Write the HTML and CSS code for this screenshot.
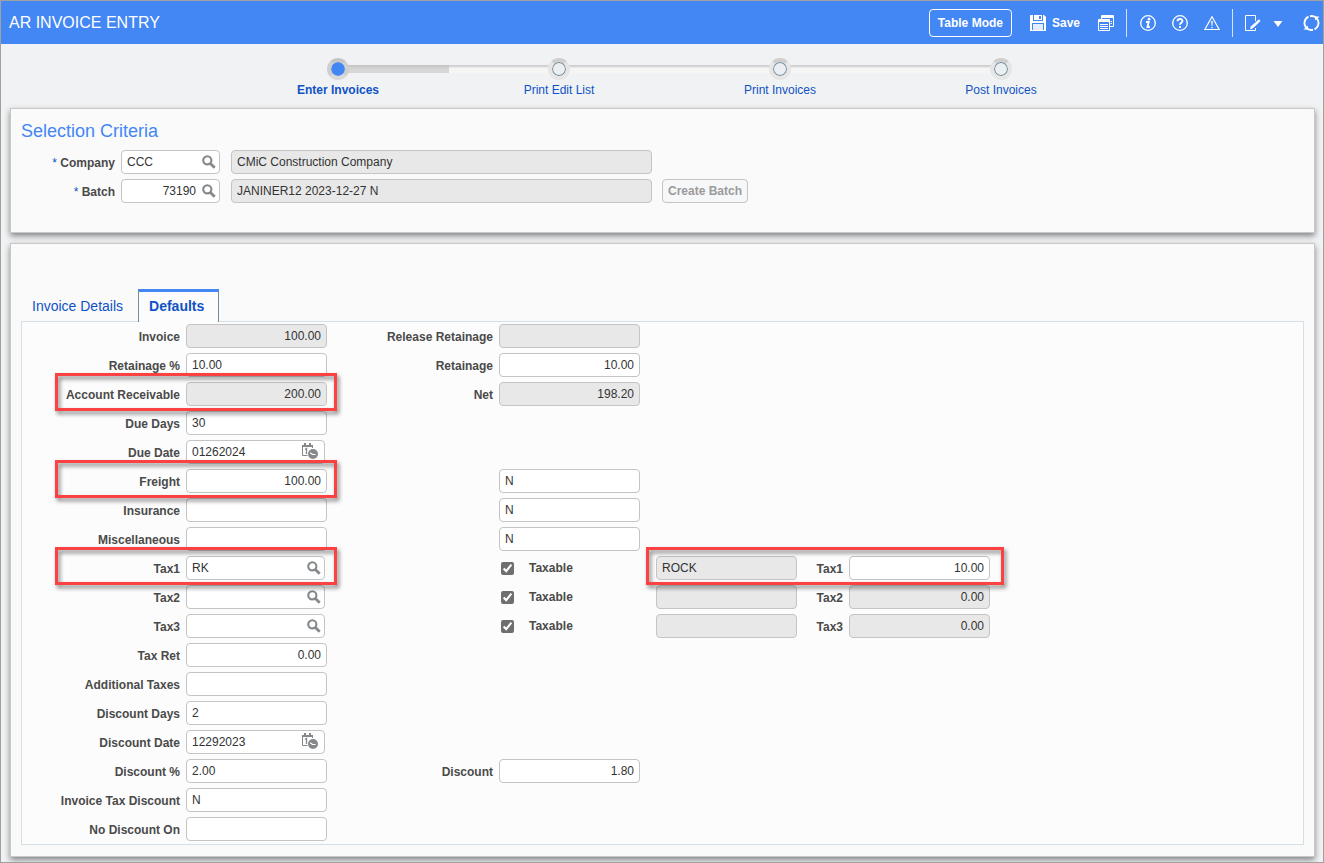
FILE: index.html
```html
<!DOCTYPE html>
<html lang="en">
<head>
<meta charset="UTF-8">
<meta name="viewport" content="width=device-width, initial-scale=1.0">
<title>AR Invoice Entry</title>
<link rel="stylesheet" href="styles.css">
</head>
<body>

<!-- shared icons -->
<svg class="sprite" aria-hidden="true">
    <symbol id="icon-search" viewBox="0 0 14 14">
        <circle cx="5.3" cy="5.3" r="4.1" fill="none" stroke="currentColor" stroke-width="2.1"/>
        <path d="M8.4 8.4L12.7 12.7" stroke="currentColor" stroke-width="2.8"/>
    </symbol>
    <symbol id="icon-date" viewBox="0 0 16 16">
        <path d="M5.5 12.5H.5V2.5H10.5V5" fill="none" stroke="currentColor"/>
        <path d="M0 2H11V4H0zM2 0H4V3H2zM7 0H9V3H7z" fill="currentColor"/>
        <path d="M3 6.5L4.5 5.5V11" fill="none" stroke="currentColor" stroke-width="1.3"/>
        <circle cx="11" cy="11" r="5" fill="currentColor"/>
        <path d="M8.2 9.7L10.5 11.5H13.5" fill="none" stroke="#fff" stroke-width="1.2"/>
    </symbol>
</svg>

<header class="topbar">
    <h1>AR INVOICE ENTRY</h1>
    <div class="actions">
        <button class="btn-mode" type="button">Table Mode</button>
        <button class="btn-save" type="button">
            <svg width="16" height="16" viewBox="0 0 16 16"><path fill="#fff" d="M0 0H14L16 2V16H0z"/><path fill="#4387f4" d="M3 0H13V6H3zM2 8H14V15H2z"/><path fill="#fff" fill-rule="evenodd" d="M4 0H12V5H4zM9 1V4H11V1z"/><path fill="#e3edfd" d="M3 9H13V15H3z"/></svg>
            Save
        </button>
        <button class="icon-btn" type="button" aria-label="Records">
            <svg width="16" height="16" viewBox="0 0 16 16" fill="none" stroke="#fff"><path d="M3.500 4V.5H15.500V11.500H12"/><path d="M3 2H16" stroke-width="2"/><path d="M.5 4.500H11.500V15.500H.5z"/><path d="M0 6H12" stroke-width="2"/><path d="M2 9.500H10M2 11.500H10M2 13.500H10M12.500 6.500H14M12.500 8.500H14"/></svg>
        </button>
    </div>
    <div class="actions divided">
        <button class="icon-btn" type="button" aria-label="Information">
            <svg width="16" height="16" viewBox="0 0 16 16"><circle cx="8" cy="8" r="7.300" fill="none" stroke="#fff" stroke-width="1.300"/><circle cx="9" cy="4.200" r="1.400" fill="#fff"/><path d="M6 7H8.700L7.500 12H9.800" fill="none" stroke="#fff" stroke-width="1.900"/></svg>
        </button>
        <button class="icon-btn" type="button" aria-label="Help">
            <svg width="16" height="16" viewBox="0 0 16 16"><circle cx="8" cy="8" r="7.300" fill="none" stroke="#fff" stroke-width="1.300"/><path d="M5.600 6.200C5.600 3.200 10.400 3.200 10.400 6C10.400 7.800 8 7.600 8 9.800" fill="none" stroke="#fff" stroke-width="2"/><path d="M7 11H9V13H7z" fill="#fff"/></svg>
        </button>
        <button class="icon-btn" type="button" aria-label="Warnings">
            <svg width="16" height="16" viewBox="0 0 16 16"><path d="M8 1.800L15.200 14.500H.8z" fill="none" stroke="#fff" stroke-width="1.200"/><path d="M7.200 6H8.800L8.400 11H7.600zM7.300 12H8.700V13.300H7.300z" fill="#fff"/></svg>
        </button>
    </div>
    <div class="actions divided edit">
        <button class="icon-btn" type="button" aria-label="Edit">
            <svg width="16" height="16" viewBox="0 0 16 16"><path d="M10.500 6V.5H.5V15.500H10.500V13" fill="none" stroke="#fff"/><path d="M5 14.500L6 11.200L14 4.300L15.500 6L8 13.200z" fill="#fff"/></svg>
        </button>
        <button class="icon-btn" type="button" aria-label="More">
            <svg width="10" height="16" viewBox="0 0 10 16"><path d="M.5 6H9.500L5 12z" fill="#fff"/></svg>
        </button>
        <button class="icon-btn refresh" type="button" aria-label="Refresh">
            <svg width="17" height="16" viewBox="0 0 17 16"><path d="M3.200 12.600A7 7 0 0 1 5.500 1.700M7 1.200A7 7 0 0 1 13 2.600M13.800 3.400A7 7 0 0 1 11.500 14.300M10 14.800A7 7 0 0 1 4 13.400" fill="none" stroke="#fff" stroke-width="1.900"/><path d="M.5 14.500H5V10.500zM16.500 1.500H12V5.500z" fill="#fff"/></svg>
        </button>
    </div>
</header>

<nav>
    <ol class="train">
        <li class="current"><a href="#">Enter Invoices</a></li>
        <li><a href="#">Print Edit List</a></li>
        <li><a href="#">Print Invoices</a></li>
        <li><a href="#">Post Invoices</a></li>
    </ol>
</nav>

<main>
    <section class="panel criteria">
        <h2>Selection Criteria</h2>
        <div class="criteria-row">
            <label for="company"><span class="req">*</span> Company</label>
            <div class="lookup"><input type="text" id="company" value="CCC"><svg><use href="#icon-search"/></svg></div>
            <input type="text" class="desc" value="CMiC Construction Company" aria-labelledby="company" readonly>
        </div>
        <div class="criteria-row">
            <label for="batch"><span class="req">*</span> Batch</label>
            <div class="lookup"><input type="text" class="num" id="batch" value="73190"><svg><use href="#icon-search"/></svg></div>
            <input type="text" class="desc" value="JANINER12 2023-12-27 N" aria-labelledby="batch" readonly>
            <button class="btn-batch" type="button" disabled>Create Batch</button>
        </div>
    </section>

    <section class="panel details">
        <div class="tabs">
            <a href="#">Invoice Details</a>
            <a href="#" class="active">Defaults</a>
        </div>
        <form class="defaults">
            <div class="row">
                <label for="invoice">Invoice</label>
                <input type="text" class="num" id="invoice" value="100.00" readonly>
                <label for="release">Release Retainage</label>
                <input type="text" class="num" id="release" readonly>
            </div>
            <div class="row">
                <label for="retainage-pct">Retainage %</label>
                <input type="text" id="retainage-pct" value="10.00">
                <label for="retainage">Retainage</label>
                <input type="text" class="num" id="retainage" value="10.00">
            </div>
            <div class="row">
                <label for="receivable">Account Receivable</label>
                <input type="text" class="num" id="receivable" value="200.00" readonly>
                <label for="net">Net</label>
                <input type="text" class="num" id="net" value="198.20" readonly>
                <span class="callout"></span>
            </div>
            <div class="row">
                <label for="due-days">Due Days</label>
                <input type="text" id="due-days" value="30">
            </div>
            <div class="row">
                <label for="due-date">Due Date</label>
                <div class="lookup date"><input type="text" id="due-date" value="01262024"><svg><use href="#icon-date"/></svg></div>
            </div>
            <div class="row">
                <label for="freight" id="freight-label">Freight</label>
                <input type="text" class="num" id="freight" value="100.00">
                <input type="text" class="second" value="N" aria-labelledby="freight-label">
                <span class="callout"></span>
            </div>
            <div class="row">
                <label for="insurance" id="insurance-label">Insurance</label>
                <input type="text" class="num" id="insurance">
                <input type="text" class="second" value="N" aria-labelledby="insurance-label">
            </div>
            <div class="row">
                <label for="misc" id="misc-label">Miscellaneous</label>
                <input type="text" class="num" id="misc">
                <input type="text" class="second" value="N" aria-labelledby="misc-label">
            </div>
            <div class="row">
                <label for="tax1" id="tax1-label">Tax1</label>
                <div class="lookup"><input type="text" id="tax1" value="RK"><svg><use href="#icon-search"/></svg></div>
                <label class="check"><input type="checkbox" checked> Taxable</label>
                <input type="text" class="tax-name" value="ROCK" aria-labelledby="tax1-label" readonly>
                <label for="tax1-amt">Tax1</label>
                <input type="text" class="num" id="tax1-amt" value="10.00">
                <span class="callout"></span>
                <span class="callout wide"></span>
            </div>
            <div class="row">
                <label for="tax2" id="tax2-label">Tax2</label>
                <div class="lookup"><input type="text" id="tax2"><svg><use href="#icon-search"/></svg></div>
                <label class="check"><input type="checkbox" checked> Taxable</label>
                <input type="text" class="tax-name" aria-labelledby="tax2-label" readonly>
                <label for="tax2-amt">Tax2</label>
                <input type="text" class="num" id="tax2-amt" value="0.00" readonly>
            </div>
            <div class="row">
                <label for="tax3" id="tax3-label">Tax3</label>
                <div class="lookup"><input type="text" id="tax3"><svg><use href="#icon-search"/></svg></div>
                <label class="check"><input type="checkbox" checked> Taxable</label>
                <input type="text" class="tax-name" aria-labelledby="tax3-label" readonly>
                <label for="tax3-amt">Tax3</label>
                <input type="text" class="num" id="tax3-amt" value="0.00" readonly>
            </div>
            <div class="row">
                <label for="tax-ret">Tax Ret</label>
                <input type="text" class="num" id="tax-ret" value="0.00">
            </div>
            <div class="row">
                <label for="add-taxes">Additional Taxes</label>
                <input type="text" id="add-taxes">
            </div>
            <div class="row">
                <label for="disc-days">Discount Days</label>
                <input type="text" id="disc-days" value="2">
            </div>
            <div class="row">
                <label for="disc-date">Discount Date</label>
                <div class="lookup date"><input type="text" id="disc-date" value="12292023"><svg><use href="#icon-date"/></svg></div>
            </div>
            <div class="row">
                <label for="disc-pct">Discount %</label>
                <input type="text" id="disc-pct" value="2.00">
                <label for="discount">Discount</label>
                <input type="text" class="num" id="discount" value="1.80">
            </div>
            <div class="row">
                <label for="tax-disc">Invoice Tax Discount</label>
                <input type="text" id="tax-disc" value="N">
            </div>
            <div class="row">
                <label for="no-disc">No Discount On</label>
                <input type="text" id="no-disc">
            </div>
        </form>
    </section>
</main>

</body>
</html>
```
FILE: styles.css
```css
* {
    box-sizing: border-box;
}
body {
    margin: 0;
    min-height: 100vh;
    border: 1px solid #a0a0a0;
    background-color: #f1f2f4;
    font-family: "Liberation Sans", Arial, sans-serif;
    font-size: 12px;
    color: #333;
}
a {
    color: #0f52c6;
    text-decoration: none;
}
button, input {
    font-family: inherit;
    font-size: 12px;
}
.sprite {
    display: none;
}

/* top bar */
.topbar {
    display: flex;
    align-items: center;
    height: 43px;
    padding: 0 3px 0 8px;
    background-color: #4387f4;
    color: #fff;
}
.topbar h1 {
    flex: 1;
    margin: 0;
    font-size: 16px;
    font-weight: normal;
}
.topbar button {
    padding: 0;
    border: none;
    background: none;
    color: #fff;
    font-weight: bold;
    cursor: pointer;
}
.topbar svg {
    display: block;
}
.actions {
    display: flex;
    align-items: center;
    gap: 18px;
    height: 28px;
    padding-right: 12px;
}
.actions .btn-mode {
    height: 28px;
    padding: 0 8px;
    border: 1px solid #fff;
    border-radius: 4px;
}
.btn-save {
    display: flex;
    align-items: center;
    gap: 6px;
}
.divided {
    gap: 16px;
    padding-left: 13px;
    border-left: 1px solid #d5e2f8;
}
.edit {
    gap: 12px;
    padding-left: 12px;
    padding-right: 0;
}
.refresh {
    margin-left: 8px;
}

/* process train */
.train {
    display: flex;
    justify-content: center;
    height: 64px;
    margin: 0;
    padding: 14px 0 0 15px;
    list-style: none;
}
.train li {
    position: relative;
    width: 221px;
    text-align: center;
}
.train a {
    display: block;
    line-height: 16px;
}
.train a::before {
    content: "";
    position: relative;
    z-index: 1;
    display: block;
    width: 14px;
    height: 14px;
    margin: 0 auto 2px;
    border: 4px solid #e6e6e6;
    border-top-color: #cfcfcf;
    border-radius: 50%;
    background-color: #eceff1;
    box-shadow: inset 0 0 0 1px #6f8798;
}
.train .current a {
    font-weight: bold;
}
.train .current a::before {
    border-color: #c6c6c6 #cfcfcf #d9d9d9;
    background-color: #4387f4;
    background-clip: padding-box;
    box-shadow: none;
}
/* connector to the next stop */
.train li:not(:last-child)::after {
    content: "";
    position: absolute;
    top: 7px;
    left: 50%;
    width: 100%;
    height: 8px;
    background: linear-gradient(#cbcbcb, #dcdcdc 2px, #f5f5f4 3px);
}
.train .current::before {
    content: "";
    position: absolute;
    z-index: 1;
    top: 7px;
    left: 50%;
    width: 50%;
    height: 8px;
    background: linear-gradient(#c3c3c3, #d6d6d6 4px);
}

/* panels */
main {
    display: flex;
    flex-direction: column;
    gap: 10px;
    padding: 0 8px 5px 9px;
}
.panel {
    padding: 0 10px;
    border: 1px solid #c8c8c8;
    background-color: #fafafa;
    box-shadow: 0 3px 6px rgba(0, 0, 0, 0.45);
}
.criteria {
    height: 125px;
}
.panel h2 {
    margin: 11px 0 8px;
    font-size: 18px;
    line-height: 22px;
    font-weight: normal;
    color: #4387f4;
}

/* fields */
label {
    font-weight: bold;
    color: #4a4a4a;
    text-align: right;
    line-height: 24px;
    padding-top: 1px;
    height: 24px;
    white-space: nowrap;
}
input[type="text"] {
    width: 100%;
    height: 24px;
    padding: 0 5px;
    border: 1px solid #c4c4c4;
    border-radius: 4px;
    background-color: #fff;
    color: #333;
}
input[type="text"]:read-only {
    background-color: #e8e8e8;
}
input.num {
    text-align: right;
}
.req {
    color: #0f52c6;
    font-weight: normal;
}
.lookup {
    position: relative;
}
.lookup svg {
    position: absolute;
    top: 5px;
    right: 4px;
    width: 14px;
    height: 14px;
    color: #85898c;
    pointer-events: none;
}
.lookup.date svg {
    top: 3px;
    right: 7px;
    width: 16px;
    height: 16px;
}
.lookup .num {
    padding-right: 23px;
}

.criteria-row {
    display: flex;
    margin-bottom: 5px;
}
.criteria-row label {
    width: 94px;
    margin-right: 6px;
}
.criteria-row .lookup {
    width: 99px;
    margin-right: 11px;
}
.criteria-row .desc {
    width: 421px;
    margin-right: 10px;
}
.btn-batch {
    padding: 0 5px;
    border: 1px solid #c4c4c4;
    border-radius: 4px;
    background-color: #f5f7f9;
    color: #9b9b9b;
    font-weight: bold;
}

/* tabs */
.tabs {
    display: flex;
    padding: 45px 0 0 1px;
    font-size: 14px;
}
.tabs a {
    height: 33px;
    margin-bottom: -1px;
    padding: 0 15px 0 10px;
    border-top: 3px solid transparent;
    line-height: 29px;
}
.tabs .active {
    position: relative;
    padding: 0 14px 0 10px;
    border-top-color: #4387f4;
    border-left: 1px solid #6f8ba0;
    border-right: 1px solid #6f8ba0;
    background-color: #fcfcfc;
    font-weight: bold;
}
.defaults {
    margin-bottom: 11px;
    padding: 2px 0 3px;
    border: 1px solid #d5dfe6;
    background-color: #fcfcfc;
}
.row {
    position: relative;
    display: grid;
    grid-template-columns: 158px 141px 160px 141px 151px 40px 141px;
    column-gap: 6px;
    height: 24px;
}
.row + .row {
    margin-top: 5px;
}
.row .lookup {
    margin-right: 2px;
}
.second, .check {
    grid-column: 4;
}
.check {
    display: flex;
    align-items: center;
    gap: 15px;
    padding: 0 0 0 2px;
    text-align: left;
}
.check input {
    width: 13px;
    height: 13px;
    margin: 1px 0 0;
    accent-color: #6f6f6f;
}
.row .tax-name {
    width: 141px;
    margin-left: 10px;
}

/* red markers over the amounts that feed the tax */
.callout {
    position: absolute;
    z-index: 2;
    top: -9px;
    left: 33px;
    width: 282px;
    height: 38px;
    border: 3px solid #fb4141;
    filter: drop-shadow(2px 3px 2px rgba(0, 0, 0, 0.5));
    pointer-events: none;
}
.callout.wide {
    left: 624px;
    width: 358px;
}
```
